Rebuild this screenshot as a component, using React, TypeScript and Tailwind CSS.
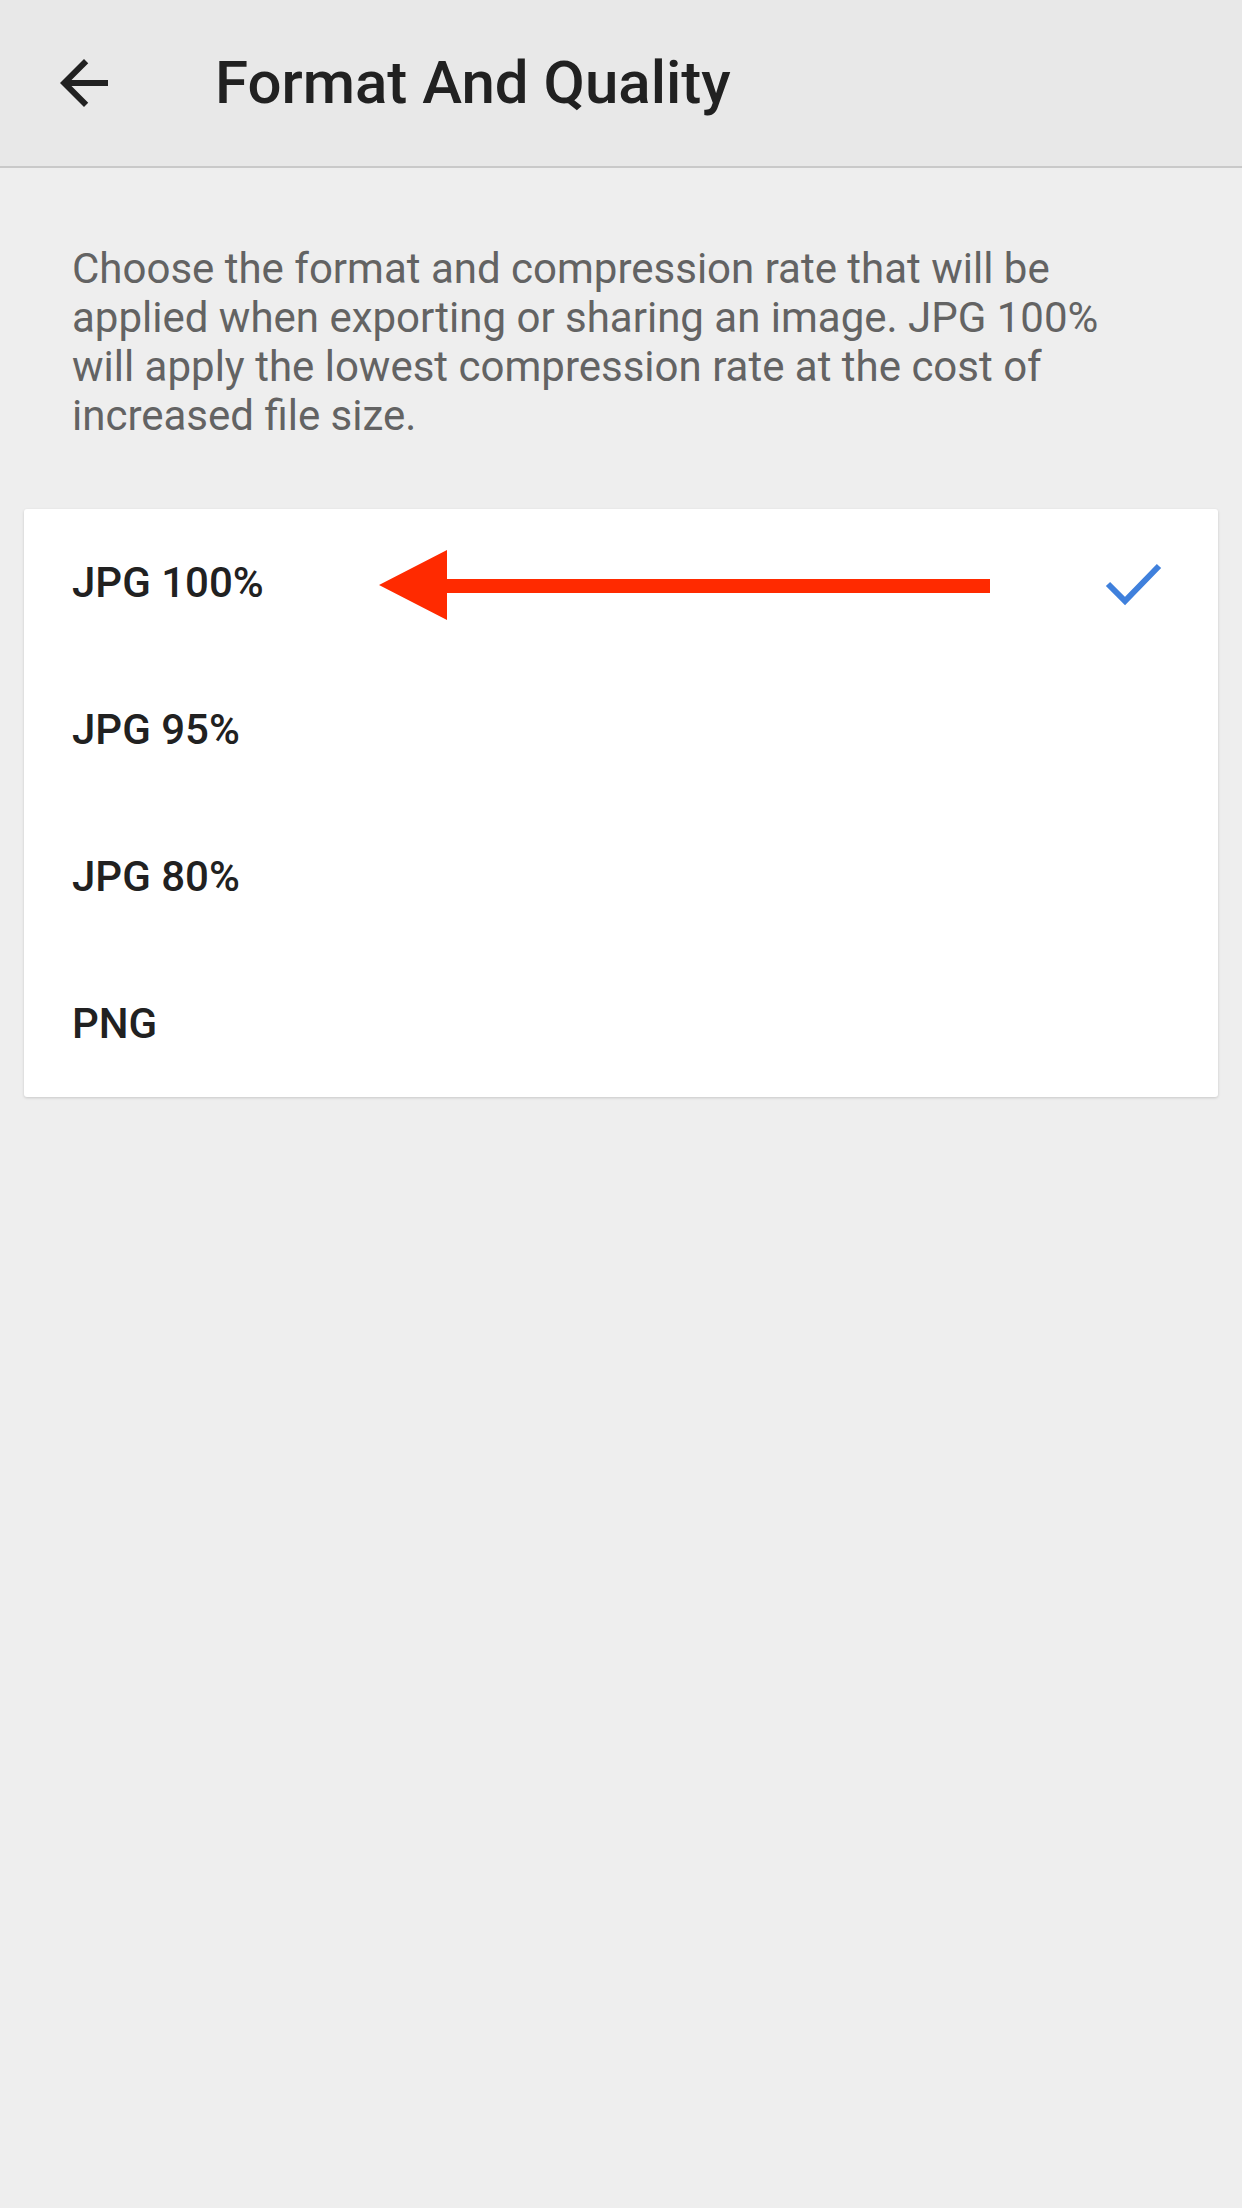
import * as React from "react";

const options = ["JPG 100%", "JPG 95%", "JPG 80%", "PNG"];

function BackArrow() {
  return (
    <svg viewBox="0 0 24 24" className="h-[72px] w-[72px] fill-[#212121]" aria-hidden>
      <path d="M20 11H7.83l5.59-5.59L12 4l-8 8 8 8 1.41-1.41L7.83 13H20v-2z" />
    </svg>
  );
}

function Check() {
  return (
    <svg width="60" height="48" viewBox="0 0 60 48" aria-hidden>
      <polyline
        points="4,25 21,42 55,7"
        fill="none"
        stroke="#3f80dc"
        strokeWidth="6"
        strokeLinecap="butt"
        strokeLinejoin="miter"
      />
    </svg>
  );
}

// red annotation arrow drawn over the first row
function RedArrow() {
  return (
    <svg
      className="absolute left-[355px] top-[41px]"
      width="612"
      height="72"
      viewBox="0 0 612 72"
      aria-hidden
    >
      <polygon points="0,35 68,0 68,29 611,29 611,43 68,43 68,70" fill="#ff2a00" />
    </svg>
  );
}

export default function App() {
  return (
    <div className="min-h-[2208px] w-full bg-[#eeeeee] font-['Roboto',sans-serif]">
      <header className="flex h-[168px] items-center border-b-2 border-[#c9c9c9] bg-[#e8e8e8]">
        <div className="ml-[48px] flex h-[72px] w-[72px] items-center justify-center">
          <BackArrow />
        </div>
        <h1 className="ml-[95px] text-[60px] font-medium leading-none text-[#212121]">
          Format And Quality
        </h1>
      </header>

      <p className="px-[72px] pt-[76px] text-[42px] leading-[49px] text-[#636363]">
        Choose the format and compression rate that will be
        <br />
        applied when exporting or sharing an image. JPG 100%
        <br />
        will apply the lowest compression rate at the cost of
        <br />
        increased file size.
      </p>

      <ul className="relative mx-[24px] mt-[69px] rounded-[3px] bg-white shadow-[0_1px_3px_rgba(0,0,0,0.16)]">
        {options.map((o, i) => (
          <li
            key={o}
            className="flex h-[147px] items-center justify-between pl-[48px] pr-[54px]"
          >
            <span className="text-[42px] font-medium text-[#212121]">{o}</span>
            {i === 0 && <Check />}
          </li>
        ))}
        <RedArrow />
      </ul>
    </div>
  );
}
